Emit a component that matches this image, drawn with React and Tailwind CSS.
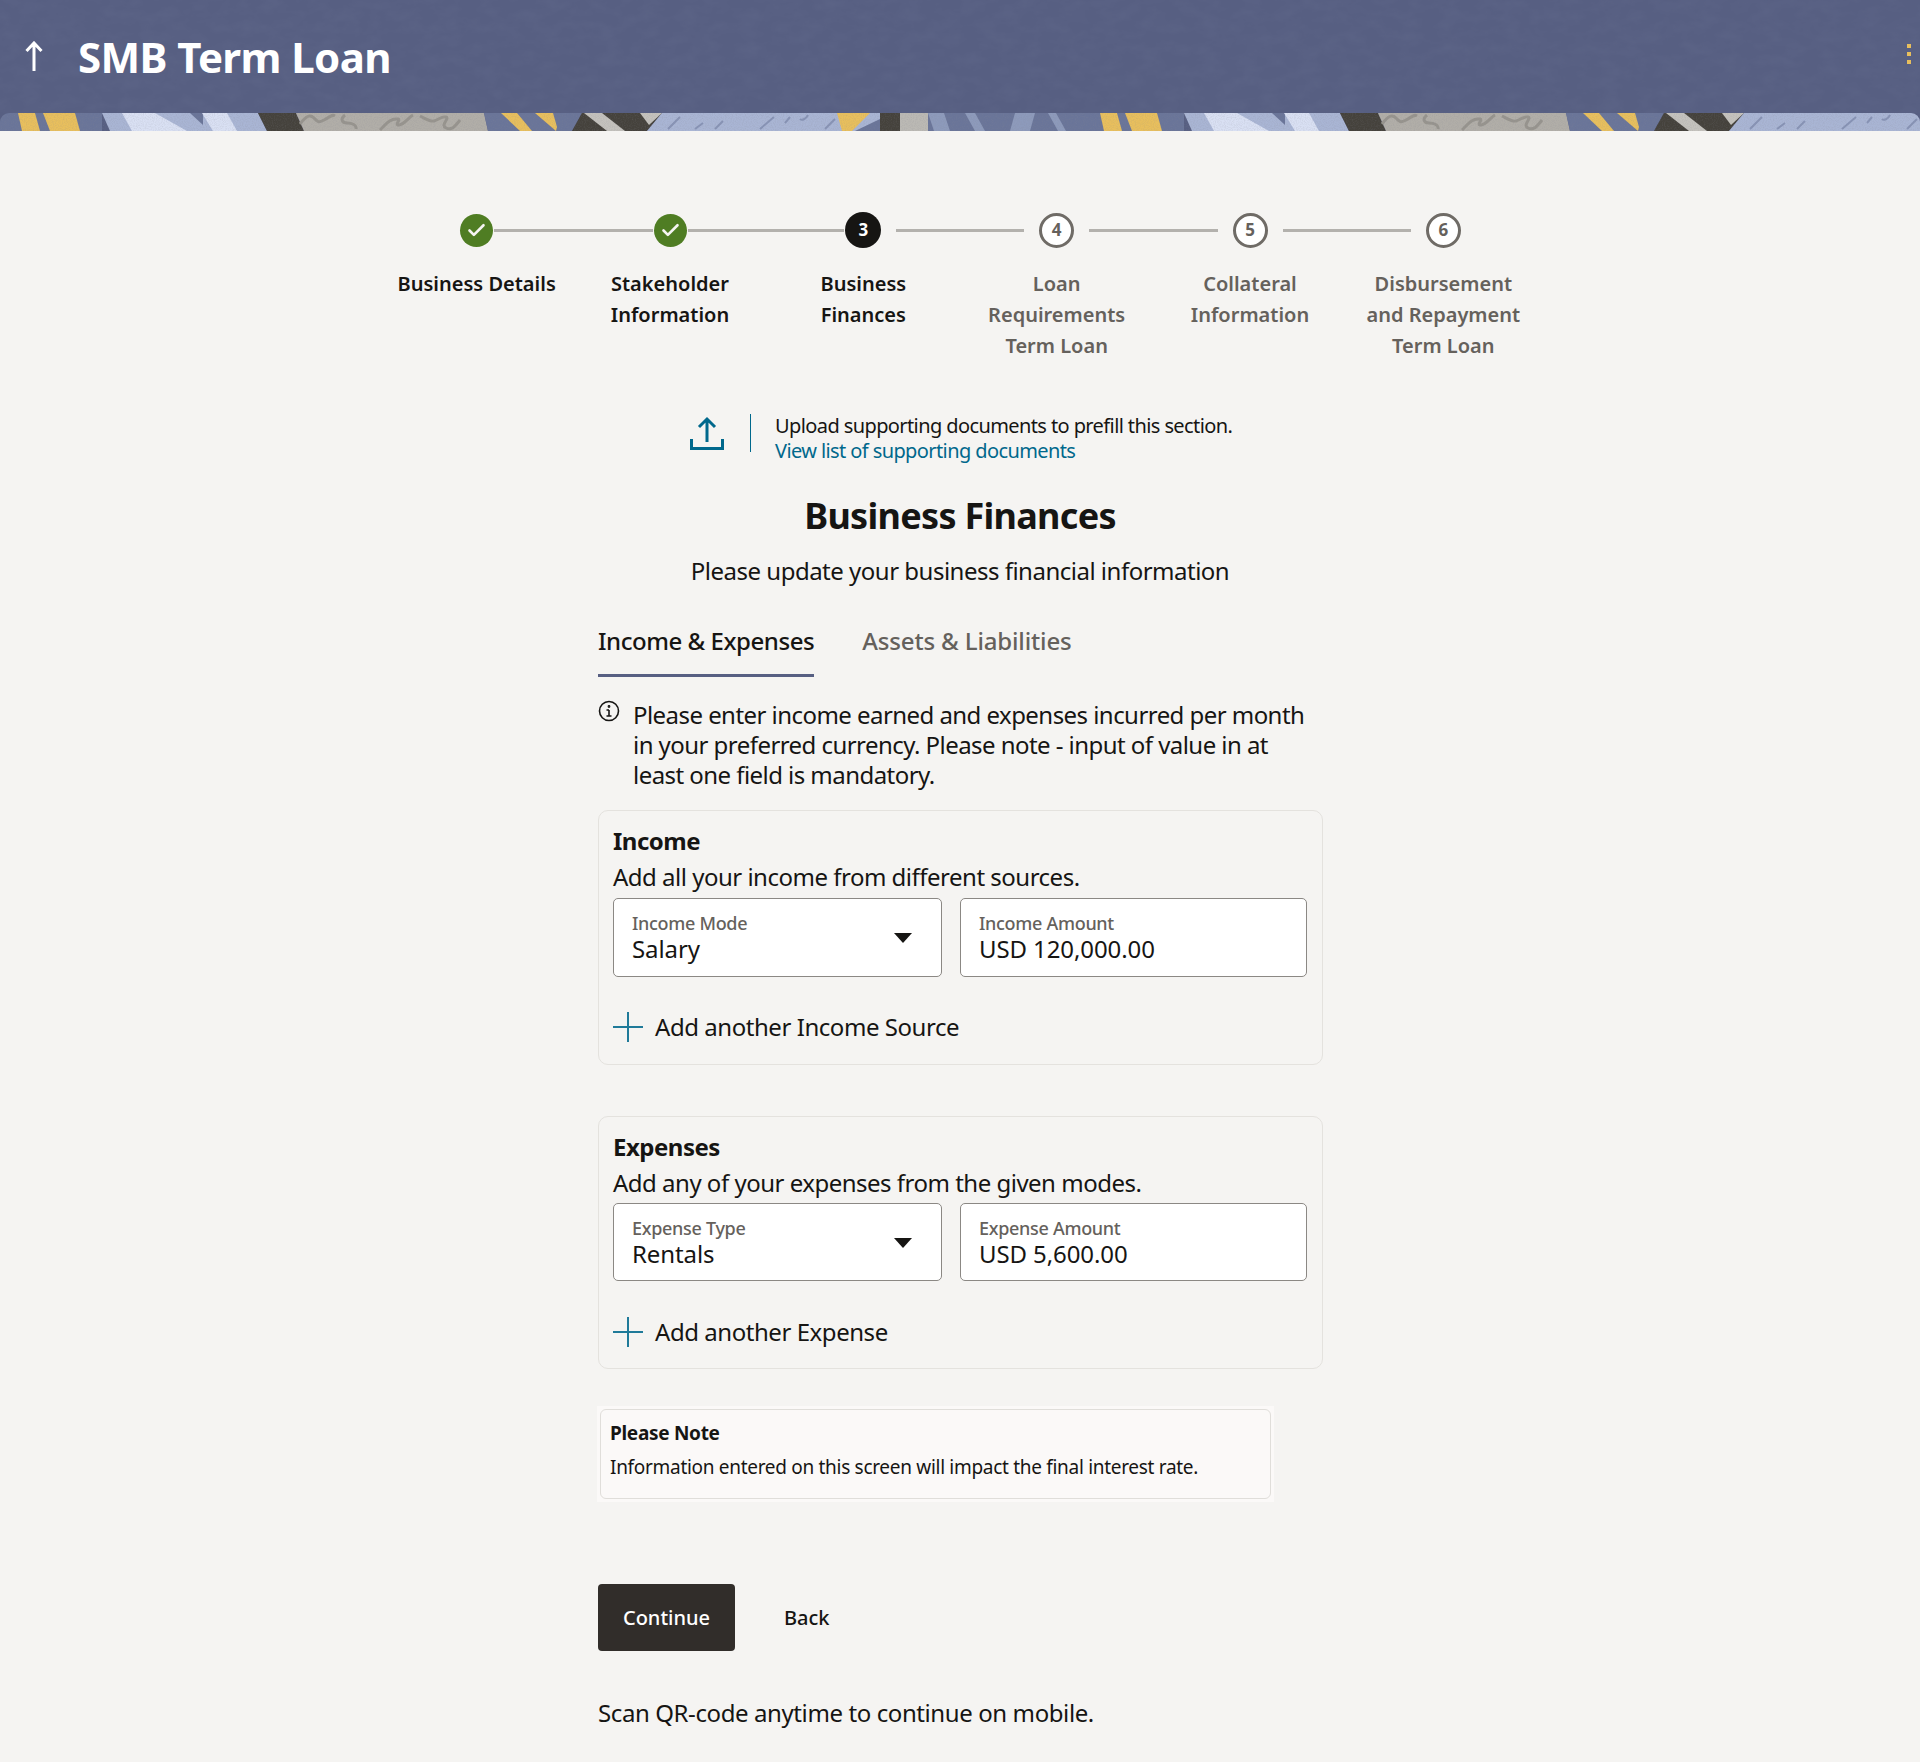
import { Check } from "lucide-react";

const steps = [
  { label: "Business Details", state: "done" },
  { label: "Stakeholder Information", state: "done" },
  { label: "Business Finances", state: "active", n: 3 },
  { label: "Loan Requirements Term Loan", state: "todo", n: 4 },
  { label: "Collateral Information", state: "todo", n: 5 },
  { label: "Disbursement and Repayment Term Loan", state: "todo", n: 6 },
];

// one repeat of the strip under the header, 1082px wide
const Band = ({ x }) => (
  <g transform={`translate(${x} 0)`}>
    <rect x="0" y="0" width="102" height="18" fill="#6a7599" />
    <polygon points="18,0 35,0 40,18 22,18" fill="#e8bf5d" />
    <polygon points="43,0 75,0 80,18 50,18" fill="#e8bf5d" />
    <polygon points="102,0 258,0 267,18 110,18" fill="#a9b5d4" />
    <polygon points="122,0 155,0 187,18 132,18" fill="#d9e0f3" />
    <polygon points="190,0 203,0 203,12" fill="#6a7599" />
    <polygon points="202,0 227,0 237,18 213,18" fill="#d9e0f3" />
    <polygon points="258,0 296,0 304,18 267,18" fill="#45423c" />
    <polygon points="296,0 484,0 488,18 304,18" fill="#b1aea8" />
    <path d="M300 11c6-8 10-10 14-6s4 5 10 2 8-6 11-4M345 2c-5 4-3 8 2 8s10 2 9 6M380 17c6-6 10-12 18-11 3 1-4 6 1 6s10-8 14-10M420 3c6 3 10 6 14 5s8-5 12-4-6 8 0 11 10-3 14-8" fill="none" stroke="#97948e" strokeWidth="3" />
    <polygon points="484,0 582,0 572,18 488,18" fill="#6a7599" />
    <polygon points="501,0 517,0 532,18 520,18" fill="#e8bf5d" />
    <polygon points="535,0 553,0 557,14 556,18" fill="#e8bf5d" />
    <polygon points="582,0 662,0 647,18 572,18" fill="#45423c" />
    <polygon points="584,0 602,0 625,18 607,18" fill="#c4c2bd" />
    <polygon points="640,0 662,0 649,12" fill="#c4c2bd" />
    <polygon points="662,0 880,0 880,18 647,18" fill="#a9b5d4" />
    <path d="M668 16l12-12M695 16l8-6M715 16l8-8M760 16l14-12M785 10l5-6M800 6c2 2 6 0 8-4M825 16l10-10" fill="none" stroke="#8793b5" strokeWidth="2" />
    <polygon points="837,0 870,0 852,18 842,18" fill="#e8bf5d" />
    <polygon points="855,18 880,6 880,18" fill="#6a7599" />
    <rect x="880" y="0" width="20" height="18" fill="#45423c" />
    <rect x="900" y="0" width="28" height="18" fill="#bbb9b4" />
    <rect x="928" y="0" width="154" height="18" fill="#6a7599" />
    <polygon points="928,0 944,0 950,18 934,18" fill="#8d9abb" />
    <polygon points="965,0 975,0 985,18 975,18" fill="#8d9abb" />
    <polygon points="1015,0 1035,0 1030,18 1010,18" fill="#8d9abb" />
    <polygon points="1048,0 1056,0 1066,18 1058,18" fill="#8d9abb" />
  </g>
);

const Strip = () => (
  <svg width="1920" height="18" viewBox="0 0 1920 18" className="block">
    <defs>
      <clipPath id="band-clip">
        <rect x="0" y="0" width="1920" height="40" rx="9" />
      </clipPath>
      <filter id="band-grain" x="0" y="0" width="100%" height="100%">
        <feTurbulence type="fractalNoise" baseFrequency="0.9" numOctaves="2" seed="4" />
        <feColorMatrix values="0 0 0 0 0.25  0 0 0 0 0.25  0 0 0 0 0.3  0 0 0 1.1 -0.45" />
      </filter>
    </defs>
    <g clipPath="url(#band-clip)">
      <Band x={0} />
      <Band x={1082} />
      <rect x="0" y="0" width="1920" height="18" filter="url(#band-grain)" opacity="0.35" />
    </g>
  </svg>
);

const StepDot = ({ step }) => {
  if (step.state === "done") {
    return (
      <div className="w-[33px] h-[33px] rounded-full bg-[#4f7d23] flex items-center justify-center shrink-0">
        <Check size={21} strokeWidth={3} className="text-[#f5f4f2]" />
      </div>
    );
  }
  if (step.state === "active") {
    return (
      <div className="w-9 h-9 rounded-full bg-[#161513] text-white text-[17px] font-bold flex items-center justify-center shrink-0">
        {step.n}
      </div>
    );
  }
  return (
    <div className="w-[35px] h-[35px] rounded-full border-[3px] border-[#6f6b66] bg-white text-[#65615c] text-[17px] font-bold flex items-center justify-center shrink-0">
      {step.n}
    </div>
  );
};

const Stepper = () => (
  <div className="w-[1160px] mx-auto grid grid-cols-6 pt-[81px]">
    {steps.map((step, i) => (
      <div key={step.label} className="flex flex-col items-center">
        <div className="w-full h-9 flex items-center">
          <div className="flex-1">
            <div className={`h-[3px] ${i === 0 ? "" : "bg-[#b3b1ad]"} ${step.state === "todo" ? "mr-[15px]" : "mr-px"}`} />
          </div>
          <StepDot step={step} />
          <div className="flex-1">
            <div className={`h-[3px] ${i === 5 ? "" : "bg-[#b3b1ad]"} ${step.state === "done" ? "ml-px" : "ml-[15px]"}`} />
          </div>
        </div>
        <div className={`mt-5 w-[165px] text-center text-[20px] leading-[31px] font-semibold ${step.state === "todo" ? "text-[#65615c]" : "text-[#161513]"}`}>
          {step.label}
        </div>
      </div>
    ))}
  </div>
);

const UploadBar = () => (
  <div className="mt-[52px] w-[724px] mx-auto pl-[92px] flex items-start">
    <svg width="34" height="34" viewBox="0 0 34 34" className="mt-[3px] shrink-0" fill="none" stroke="#00688c" strokeWidth="3">
      <path d="M17 26V3M9 11l8-8 8 8" />
      <path d="M1.500 23v9.500h31V23" />
    </svg>
    <div className="w-px h-[38px] bg-[#00688c] ml-[26px] mt-px shrink-0" />
    <div className="ml-6 text-[20px] leading-[25px] tracking-[-0.6px]">
      <div className="text-[#161513]">Upload supporting documents to prefill this section.</div>
      <div className="text-[#00688c]">View list of supporting documents</div>
    </div>
  </div>
);

const Field = ({ label, value, select, className }) => (
  <div className={`relative bg-white border border-[#8b8884] rounded-[5px] pl-[18px] pt-[13px] ${className}`}>
    <div className="text-[18px] leading-[22px] font-medium text-[#65615c] tracking-[-0.3px]">{label}</div>
    <div className="text-[24px] leading-[30px] text-[#161513] tracking-[-0.1px]">{value}</div>
    {select && (
      <svg width="18" height="10" viewBox="0 0 18 10" className="absolute right-[29px] top-[34px]">
        <polygon points="0,0 18,0 9,10" fill="#161513" />
      </svg>
    )}
  </div>
);

const Section = ({ title, sub, fields, add, fieldsGap, fieldHeight, addGap, bottom }) => (
  <div className={`w-[725px] border border-[#e4e2de] rounded-[10px] px-[14px] pt-[15px] ${bottom}`}>
    <div className="text-[24px] leading-[30px] font-bold text-[#161513] tracking-[-0.5px]">{title}</div>
    <div className="mt-1.5 text-[24px] leading-[30px] text-[#161513] tracking-[-0.5px]">{sub}</div>
    <div className={`flex gap-[18px] ${fieldsGap}`}>
      <Field {...fields[0]} select className={`w-[329px] ${fieldHeight}`} />
      <Field {...fields[1]} className={`w-[347px] ${fieldHeight}`} />
    </div>
    <div className={`flex items-center h-[30px] ${addGap}`}>
      <svg width="30" height="30" viewBox="0 0 30 30" className="shrink-0" fill="none" stroke="#1f7a99" strokeWidth="2">
        <path d="M15 0v30M0 15h30" />
      </svg>
      <span className="ml-3 text-[24px] leading-[30px] text-[#161513] tracking-[-0.45px]">{add}</span>
    </div>
  </div>
);

export default function App() {
  return (
    <div className="min-h-screen bg-[#f5f4f2] font-['Noto_Sans',sans-serif] pb-8">
      <header className="relative h-[113px] bg-[#575f82] flex items-center overflow-hidden">
        <svg className="absolute inset-0 w-full h-full" aria-hidden="true">
          <filter id="head-grain">
            <feTurbulence type="fractalNoise" baseFrequency="0.05 0.09" numOctaves="3" seed="7" />
            <feColorMatrix values="0 0 0 0 0.45  0 0 0 0 0.5  0 0 0 0 0.65  0 0 0 0.6 -0.2" />
          </filter>
          <rect width="100%" height="100%" filter="url(#head-grain)" opacity="0.13" />
        </svg>
        <svg width="20" height="30" viewBox="0 0 20 30" className="relative ml-6 -mt-0.5 shrink-0" fill="none" stroke="#fff" strokeWidth="3">
          <path d="M10 30V2M2.500 10L10 2l7.500 8" />
        </svg>
        <h1 className="relative ml-[34px] text-[42px] font-bold text-white tracking-[-0.6px]">SMB Term Loan</h1>
        <div className="absolute right-[9px] top-[44px] flex flex-col gap-1">
          <span className="w-1 h-1 bg-[#e8bf5d]" />
          <span className="w-1 h-1 bg-[#e8bf5d]" />
          <span className="w-1 h-1 bg-[#e8bf5d]" />
        </div>
      </header>
      <div className="bg-[#575f82]">
        <Strip />
      </div>

      <Stepper />
      <UploadBar />

      <h2 className="mt-[31px] text-center text-[36px] leading-[44px] font-bold text-[#161513] tracking-[-0.7px]">Business Finances</h2>
      <p className="mt-[17px] text-center text-[24px] leading-8 text-[#161513] tracking-[-0.5px]">Please update your business financial information</p>

      <main className="w-[724px] mx-auto">
        <div className="mt-[38px] flex gap-12 text-[24px] leading-8 font-medium">
          <div className="pb-[17px] border-b-[3px] border-[#575f82] text-[#161513] tracking-[-0.45px]">Income &amp; Expenses</div>
          <div className="text-[#65615c] tracking-[-0.15px]">Assets &amp; Liabilities</div>
        </div>

        <div className="mt-[23px] flex">
          <svg width="22" height="22" viewBox="0 0 22 22" className="shrink-0" fill="none" stroke="#161513" strokeWidth="1.600">
            <circle cx="11" cy="11" r="9.500" />
            <path d="M11 10v6M8.500 10H11M8.500 16h5" />
            <circle cx="11" cy="6.500" r="0.600" />
          </svg>
          <p className="ml-[13px] text-[24px] leading-[30px] text-[#161513] tracking-[-0.55px]">
            Please enter income earned and expenses incurred per month in your preferred currency. Please note - input of value in at least one field is mandatory.
          </p>
        </div>

        <div className="mt-5">
          <Section
            title="Income"
            sub="Add all your income from different sources."
            fields={[
              { label: "Income Mode", value: "Salary" },
              { label: "Income Amount", value: "USD 120,000.00" },
            ]}
            add="Add another Income Source"
            fieldsGap="mt-1.5"
            fieldHeight="h-[79px]"
            addGap="mt-[35px]"
            bottom="pb-[22px]"
          />
        </div>
        <div className="mt-[51px]">
          <Section
            title="Expenses"
            sub="Add any of your expenses from the given modes."
            fields={[
              { label: "Expense Type", value: "Rentals" },
              { label: "Expense Amount", value: "USD 5,600.00" },
            ]}
            add="Add another Expense"
            fieldsGap="mt-[5px]"
            fieldHeight="h-[78px]"
            addGap="mt-9"
            bottom="pb-[21px]"
          />
        </div>

        <div className="mt-[37px] -ml-px w-[677px] p-[3px] bg-[#fbf9f8]">
          <div className="border border-[#e0deda] rounded-[6px] h-[90px] px-[9px] pt-[11px]">
            <div className="text-[19px] leading-6 font-bold text-[#161513] tracking-[-0.3px]">Please Note</div>
            <div className="mt-[10px] text-[19px] leading-6 text-[#161513] tracking-[-0.3px]">Information entered on this screen will impact the final interest rate.</div>
          </div>
        </div>

        <div className="mt-[82px] flex items-center">
          <button className="w-[137px] h-[67px] rounded-[4px] bg-[#312d2a] text-white text-[20px] font-medium">Continue</button>
          <button className="ml-[49px] text-[20px] font-medium text-[#161513]">Back</button>
        </div>

        <p className="mt-[46px] text-[24px] leading-8 text-[#161513] tracking-[-0.4px]">Scan QR-code anytime to continue on mobile.</p>
      </main>
    </div>
  );
}
